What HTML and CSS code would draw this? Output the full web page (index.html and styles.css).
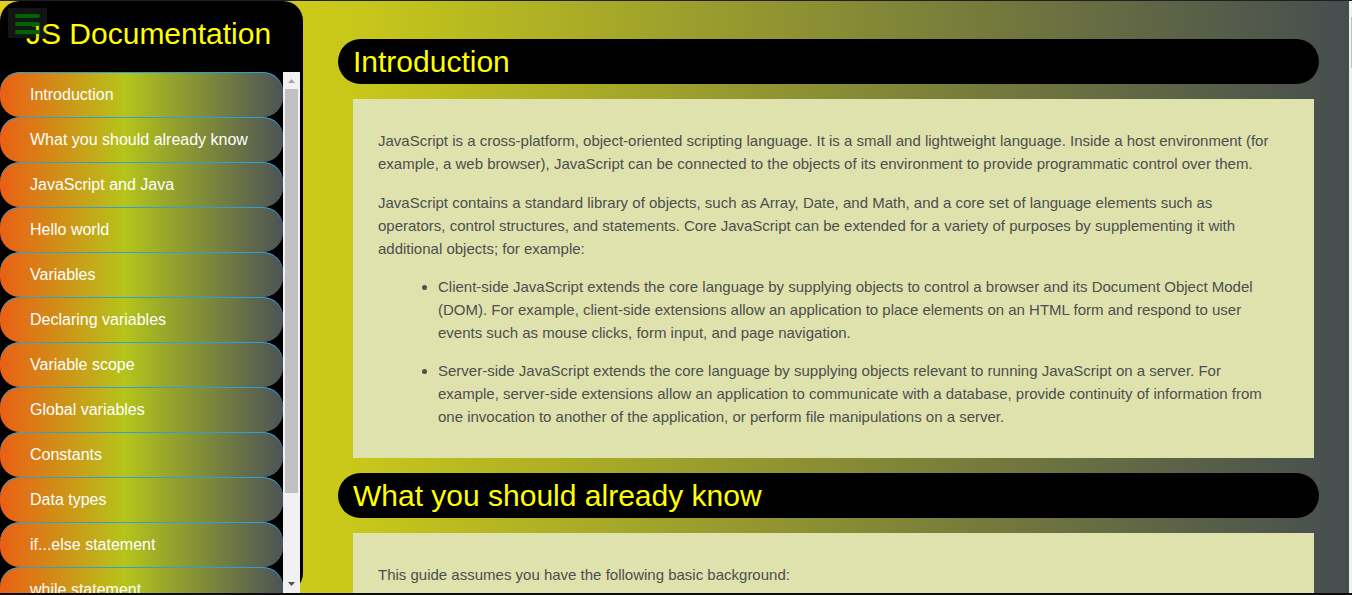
FILE: index.html
```html
<!DOCTYPE html>
<html lang="en">
<head>
<meta charset="utf-8">
<title>JS Documentation</title>
<link rel="stylesheet" href="styles.css">
</head>
<body>
<div class="page">
  <nav class="sidebar" aria-label="Documentation">
    <button class="menu-toggle" type="button" aria-label="Toggle menu">
      <span class="menu-line"></span>
      <span class="menu-line"></span>
      <span class="menu-line"></span>
    </button>
    <header class="brand">JS Documentation</header>
    <div class="nav-area">
      <ul class="nav-list">
        <li><a class="nav-link" href="#introduction">Introduction</a></li>
        <li><a class="nav-link" href="#already-know">What you should already know</a></li>
        <li><a class="nav-link" href="#java">JavaScript and Java</a></li>
        <li><a class="nav-link" href="#hello">Hello world</a></li>
        <li><a class="nav-link" href="#variables">Variables</a></li>
        <li><a class="nav-link" href="#declaring">Declaring variables</a></li>
        <li><a class="nav-link" href="#scope">Variable scope</a></li>
        <li><a class="nav-link" href="#globals">Global variables</a></li>
        <li><a class="nav-link" href="#constants">Constants</a></li>
        <li><a class="nav-link" href="#types">Data types</a></li>
        <li><a class="nav-link" href="#if-else">if...else statement</a></li>
        <li><a class="nav-link" href="#while">while statement</a></li>
      </ul>
      <div class="scrollbar" aria-hidden="true">
        <svg class="scroll-arrow" viewBox="0 0 17 17"><path d="M5 11 8.500 7 12 11Z" fill="#a3a3a3"/></svg>
        <div class="scroll-track"><div class="scroll-thumb"></div></div>
        <svg class="scroll-arrow" viewBox="0 0 17 17"><path d="M5 6 8.500 10 12 6Z" fill="#505050"/></svg>
      </div>
    </div>
  </nav>
  <main class="content">
    <section id="introduction">
      <h2 class="section-title">Introduction</h2>
      <article class="panel">
        <p>JavaScript is a cross-platform, object-oriented scripting language. It is a small and lightweight language. Inside a host environment (for example, a web browser), JavaScript can be connected to the objects of its environment to provide programmatic control over them.</p>
        <p>JavaScript contains a standard library of objects, such as Array, Date, and Math, and a core set of language elements such as operators, control structures, and statements. Core JavaScript can be extended for a variety of purposes by supplementing it with additional objects; for example:</p>
        <ul class="points">
          <li>Client-side JavaScript extends the core language by supplying objects to control a browser and its Document Object Model (DOM). For example, client-side extensions allow an application to place elements on an HTML form and respond to user events such as mouse clicks, form input, and page navigation.</li>
          <li>Server-side JavaScript extends the core language by supplying objects relevant to running JavaScript on a server. For example, server-side extensions allow an application to communicate with a database, provide continuity of information from one invocation to another of the application, or perform file manipulations on a server.</li>
        </ul>
      </article>
    </section>
    <section id="already-know">
      <h2 class="section-title">What you should already know</h2>
      <article class="panel">
        <p>This guide assumes you have the following basic background:</p>
      </article>
    </section>
  </main>
  <div class="page-scrollbar" aria-hidden="true"><div class="page-thumb"></div></div>
</div>
</body>
</html>
```

FILE: styles.css
```css
* {
  box-sizing: border-box;
}

body {
  margin: 0;
  font-family: "Liberation Sans", Arial, sans-serif;
}

.page {
  display: flex;
  height: 100vh;
  overflow: hidden;
  border-top: 1px solid #202020;
  border-bottom: 2px solid #0c0c0c;
  background: linear-gradient(to right, #e0d01a 0%, #c8c81a 26%, #454d50 100%);
}

.sidebar {
  position: relative;
  display: flex;
  flex-direction: column;
  flex: 0 0 303px;
  background: #000;
  border-radius: 20px 20px 20px 0;
}

.menu-toggle {
  position: absolute;
  top: 7px;
  left: 8px;
  display: flex;
  flex-direction: column;
  gap: 4px;
  width: 39px;
  height: 30px;
  padding: 6px 7px;
  border: 0;
  background: rgba(100, 100, 100, 0.2);
}

.menu-line {
  width: 25px;
  height: 4px;
  flex: none;
  border-radius: 2px;
  background: #006400;
}

.brand {
  flex: none;
  height: 71px;
  padding: 15px 0 0 26px;
  color: #ff0;
  font-size: 30px;
  line-height: 35px;
}

.nav-area {
  display: flex;
  flex: 1;
  min-height: 0;
  padding-right: 3px;
}

.nav-list {
  flex: 1;
  margin: 0;
  padding: 0;
  overflow: hidden;
  list-style: none;
}

.nav-link {
  display: block;
  height: 45px;
  padding-left: 30px;
  border-radius: 20px;
  background: linear-gradient(to right, #ea5f14 0%, #b5c41b 44%, #4c5356 100%);
  box-shadow: inset 0 1px 0 #2ba0dc;
  color: #fff;
  font-size: 16px;
  line-height: 45px;
  text-decoration: none;
}

.scrollbar {
  display: flex;
  flex-direction: column;
  flex: 0 0 17px;
  background: #f1f1f1;
}

.scroll-arrow {
  flex: none;
  width: 17px;
  height: 17px;
}

.scroll-track {
  flex: 1;
  padding: 0 2px;
}

.scroll-thumb {
  height: 83%;
  background: #c1c1c1;
}

.content {
  flex: 1;
  min-width: 0;
  padding: 38px 30px 0 35px;
}

.section-title {
  margin: 0;
  padding-left: 15px;
  border-radius: 23px;
  background: #000;
  color: #ff0;
  font-size: 30px;
  font-weight: 400;
  line-height: 45px;
}

.panel {
  margin: 15px 5px 15px 15px;
  padding: 15px 40px 15px 25px;
  overflow: hidden;
  background: #dfe2ad;
  color: #4d4e4e;
  font-size: 15px;
  line-height: 23px;
}

.panel p {
  margin: 15px 0;
}

.panel p + p {
  margin-top: 16px;
}

.points {
  margin: 0;
  padding-left: 60px;
}

.points li {
  margin-bottom: 15px;
}

.page-scrollbar {
  flex: 0 0 3px;
  padding-top: 16px;
  background: #f1f1f1;
}

.page-thumb {
  height: 51px;
  margin-left: 2px;
  background: #c1c1c1;
}
```
